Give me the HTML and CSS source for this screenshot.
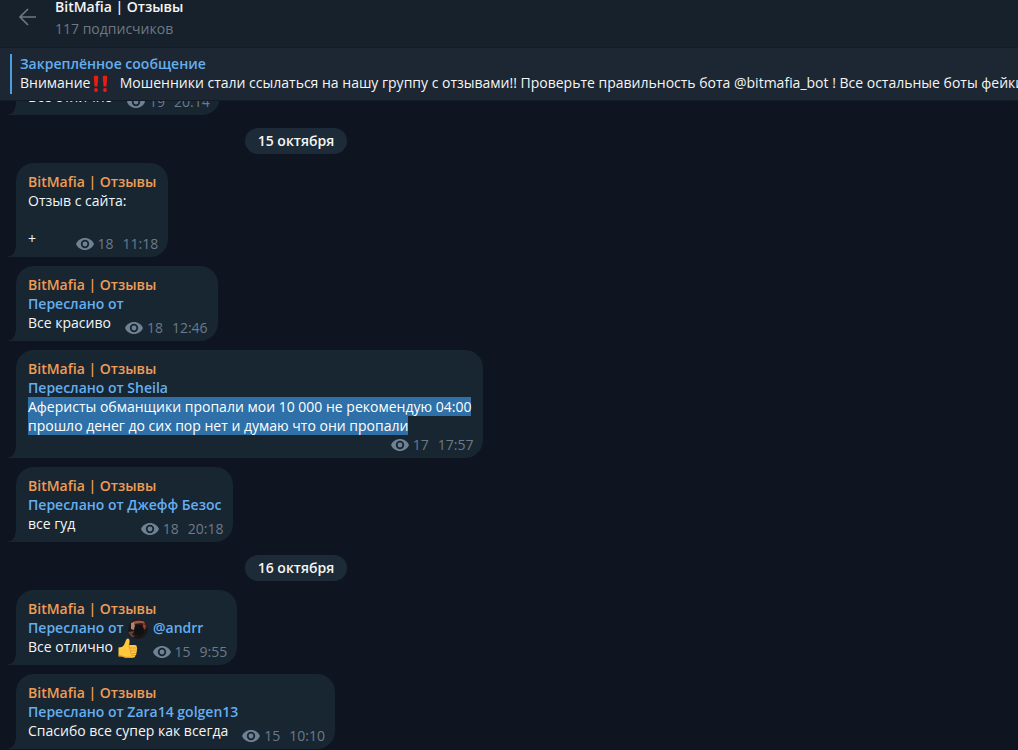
FILE: index.html
```html
<!DOCTYPE html>
<html lang="ru">
<head>
  <meta charset="UTF-8">
  <meta name="viewport" content="width=device-width, initial-scale=1.0">
  <title>BitMafia | Отзывы</title>
  <link rel="stylesheet" href="styles.css">
</head>
<body>
  <!-- общие иконки -->
  <svg class="sprite" aria-hidden="true">
    <symbol id="eye" viewBox="0 0 18 12">
      <path fill-rule="evenodd" d="M9 0C4.900 0 1.500 2.400 0 6c1.500 3.600 4.900 6 9 6s7.500-2.400 9-6c-1.500-3.600-4.900-6-9-6zm0 10.200A4.200 4.200 0 1 1 9 1.800a4.200 4.200 0 0 1 0 8.400z"/>
      <circle cx="9" cy="6" r="2.400"/>
    </symbol>
  </svg>

  <header class="header">
    <button class="back-btn" type="button" aria-label="Назад">
      <svg viewBox="0 0 18 18" width="18" height="18">
        <path d="M18 9H2.500M10 1L2 9l8 8" fill="none" stroke="currentColor" stroke-width="1.700"/>
      </svg>
    </button>
    <div class="header-info">
      <h1>BitMafia | Отзывы</h1>
      <p>117 подписчиков</p>
    </div>
  </header>

  <section class="pinned">
    <div class="pinned-body">
      <h2>Закреплённое сообщение</h2>
      <p>Внимание<svg class="emoji" viewBox="0 0 20 20" role="img" aria-label="!!"><g fill="#ee1c10"><path d="M2.700 3q0-1.500 2.300-1.500T7.300 3L6.400 12.500H3.600z"/><path d="M11.700 3q0-1.500 2.300-1.500T16.300 3L15.400 12.500H12.600z"/><circle cx="5" cy="16" r="1.900"/><circle cx="14" cy="16" r="1.900"/></g></svg>&nbsp; Мошенники стали ссылаться на нашу группу с отзывами!! Проверьте правильность бота @bitmafia_bot ! Все остальные боты фейки</p>
    </div>
  </section>

  <main class="chat">
    <div class="history">
      <article class="message">
        <h3>BitMafia | Отзывы</h3>
        <p class="forward">Переслано от</p>
        <div class="last-line">
          <p>Все отлично</p>
          <div class="meta"><svg class="eye"><use href="#eye"/></svg><span>19</span><time>20:14</time></div>
        </div>
      </article>

      <div class="date">15 октября</div>

      <article class="message">
        <h3>BitMafia | Отзывы</h3>
        <p>Отзыв с сайта:<br><br></p>
        <div class="last-line">
          <p>+</p>
          <div class="meta"><svg class="eye"><use href="#eye"/></svg><span>18</span><time>11:18</time></div>
        </div>
      </article>

      <article class="message">
        <h3>BitMafia | Отзывы</h3>
        <p class="forward">Переслано от</p>
        <div class="last-line">
          <p>Все красиво</p>
          <div class="meta"><svg class="eye"><use href="#eye"/></svg><span>18</span><time>12:46</time></div>
        </div>
      </article>

      <article class="message">
        <h3>BitMafia | Отзывы</h3>
        <p class="forward">Переслано от Sheila</p>
        <p><mark>Аферисты обманщики пропали мои 10 000 не рекомендую 04:00<br>прошло денег до сих пор нет и думаю что они пропали</mark></p>
        <div class="last-line meta-only">
          <div class="meta"><svg class="eye"><use href="#eye"/></svg><span>17</span><time>17:57</time></div>
        </div>
      </article>

      <article class="message">
        <h3>BitMafia | Отзывы</h3>
        <p class="forward">Переслано от Джефф Безос</p>
        <div class="last-line">
          <p>все гуд</p>
          <div class="meta"><svg class="eye"><use href="#eye"/></svg><span>18</span><time>20:18</time></div>
        </div>
      </article>

      <div class="date">16 октября</div>

      <article class="message">
        <h3>BitMafia | Отзывы</h3>
        <p class="forward">Переслано от <svg class="emoji" viewBox="0 0 20 20" aria-hidden="true">
            <clipPath id="avatar"><circle cx="10" cy="10" r="10"/></clipPath>
            <g clip-path="url(#avatar)">
              <rect width="20" height="20" fill="#1c1717"/>
              <path d="M4 0h14l2 9-4 1-5-5-6 1z" fill="#4a1018"/>
              <path d="M5 3q5-2 11-.5l1 2.500-4-1-8 1z" fill="#8a6046"/>
              <path d="M3 4l3-1 1 4-1 4-3-1z" fill="#b08370"/>
              <path d="M15 5l3 1-1 5-2-3z" fill="#7d4a3a"/>
              <path d="M0 13l7-1-3 3 3 3H2z" fill="#6a4033"/>
              <path d="M7 7l7-1 2 8-4 3-6-3z" fill="#0f1113"/>
            </g>
          </svg> @andrr</p>
        <div class="last-line">
          <p>Все отлично <svg class="emoji" viewBox="0 0 20 20" role="img" aria-label="Палец вверх">
            <path d="M.5 9.500q4 0 5.500-2.500l2.300-5.500Q10-.7 11.300 1.500q.6 2.500-.3 5.500h6q2 .3 1.800 2.200.8 1.300-.1 2.700.7 1.500-.4 2.700.5 1.600-.8 2.700-.2 2.500-2.700 2.500H8q-2.500-.4-4-1.300H.5z" fill="#ffc83d"/>
            <path d="M11 7.200q-.8 2.200 1.300 2.800h6.300M12 10q-1 2 .8 2.800h5.700M12.500 12.900q-.7 2.100 1 2.600h4.500M13.200 15.600q-.5 1.600.7 2h3" fill="none" stroke="#d9892b" stroke-width=".7"/>
            <path d="M1 17.500q2.500 0 4 .8 2 1 4 1h5.500" fill="none" stroke="#e79a2c" stroke-width="1"/>
          </svg></p>
          <div class="meta"><svg class="eye"><use href="#eye"/></svg><span>15</span><time>9:55</time></div>
        </div>
      </article>

      <article class="message">
        <h3>BitMafia | Отзывы</h3>
        <p class="forward">Переслано от Zara14 golgen13</p>
        <div class="last-line">
          <p>Спасибо все супер как всегда</p>
          <div class="meta"><svg class="eye"><use href="#eye"/></svg><span>15</span><time>10:10</time></div>
        </div>
      </article>
    </div>
  </main>
</body>
</html>
```

FILE: styles.css
```css
* {
  margin: 0;
  padding: 0;
  box-sizing: border-box;
}

body {
  display: flex;
  flex-direction: column;
  height: 100vh;
  overflow: hidden;
  font-family: "Open Sans", "Noto Sans", sans-serif;
  font-size: 14px;
  line-height: 19px;
  background-color: #0e1520;
  color: #f5f5f5;
}

h1, h2, h3 {
  font-size: 14px;
  font-weight: 600;
}

.sprite {
  display: none;
}

/* шапка */
.header {
  display: flex;
  flex-shrink: 0;
  align-items: flex-start;
  gap: 19px;
  padding: 0 18px 11px;
  background-color: #17212b;
  border-bottom: 1px solid #131c25;
}

.header-info h1,
.header-info p {
  line-height: 14px;
}

.header-info p {
  margin-top: 8px;
  color: #6c7883;
}

.back-btn {
  display: flex;
  margin-top: 8px;
  border: none;
  background: none;
  color: #6c7883;
  cursor: pointer;
}

/* закреплённое сообщение */
.pinned {
  flex-shrink: 0;
  padding: 6px 0 6px 10px;
  background-color: #1c2733;
  border-bottom: 1px solid #131c25;
}

.pinned-body {
  padding: 0 0 2px 8px;
  border-left: 2px solid #4a9fe0;
  white-space: nowrap;
  overflow: hidden;
}

.pinned h2,
.forward {
  color: #65aeef;
}

.emoji {
  position: relative;
  top: -2px;
  width: 20px;
  height: 20px;
  margin: -4px 1px;
  vertical-align: -4px;
}

/* лента */
.chat {
  display: flex;
  flex: 1;
  flex-direction: column;
  justify-content: flex-end;
  min-height: 0;
  overflow: hidden;
}

.history {
  display: flex;
  flex-direction: column;
  align-items: flex-start;
  gap: 9px;
  width: 100%;
  max-width: 592px;
  padding: 0 16px 1px;
}

.date {
  align-self: center;
  margin-top: 4px;
  padding: 3px 13px 4px;
  border-radius: 13px;
  background-color: #1d2a37;
  font-weight: 600;
}

.message {
  position: relative;
  padding: 9px 12px;
  border-radius: 18px 18px 18px 0;
  background-color: #182632;
}

.message h3 {
  color: #f09c55;
}

.message .forward {
  font-weight: 600;
}

/* хвостик */
.message::before {
  content: "";
  position: absolute;
  left: -8px;
  bottom: 0;
  width: 8px;
  height: 10px;
  background: radial-gradient(ellipse 8px 10px at 0 0, transparent 92%, #182632 98%);
}

.message mark {
  background-color: #2e70a7;
  color: #fff;
}

.last-line {
  display: flex;
  justify-content: space-between;
  align-items: flex-end;
  gap: 14px;
}

.meta-only {
  justify-content: flex-end;
}

.meta {
  display: flex;
  align-items: center;
  margin: 0 -2px -5px 0;
  color: #6c7a88;
}

.meta time {
  margin-left: 9px;
}

.eye {
  width: 18px;
  height: 12px;
  margin-right: 4px;
  fill: #6f8294;
}
```
